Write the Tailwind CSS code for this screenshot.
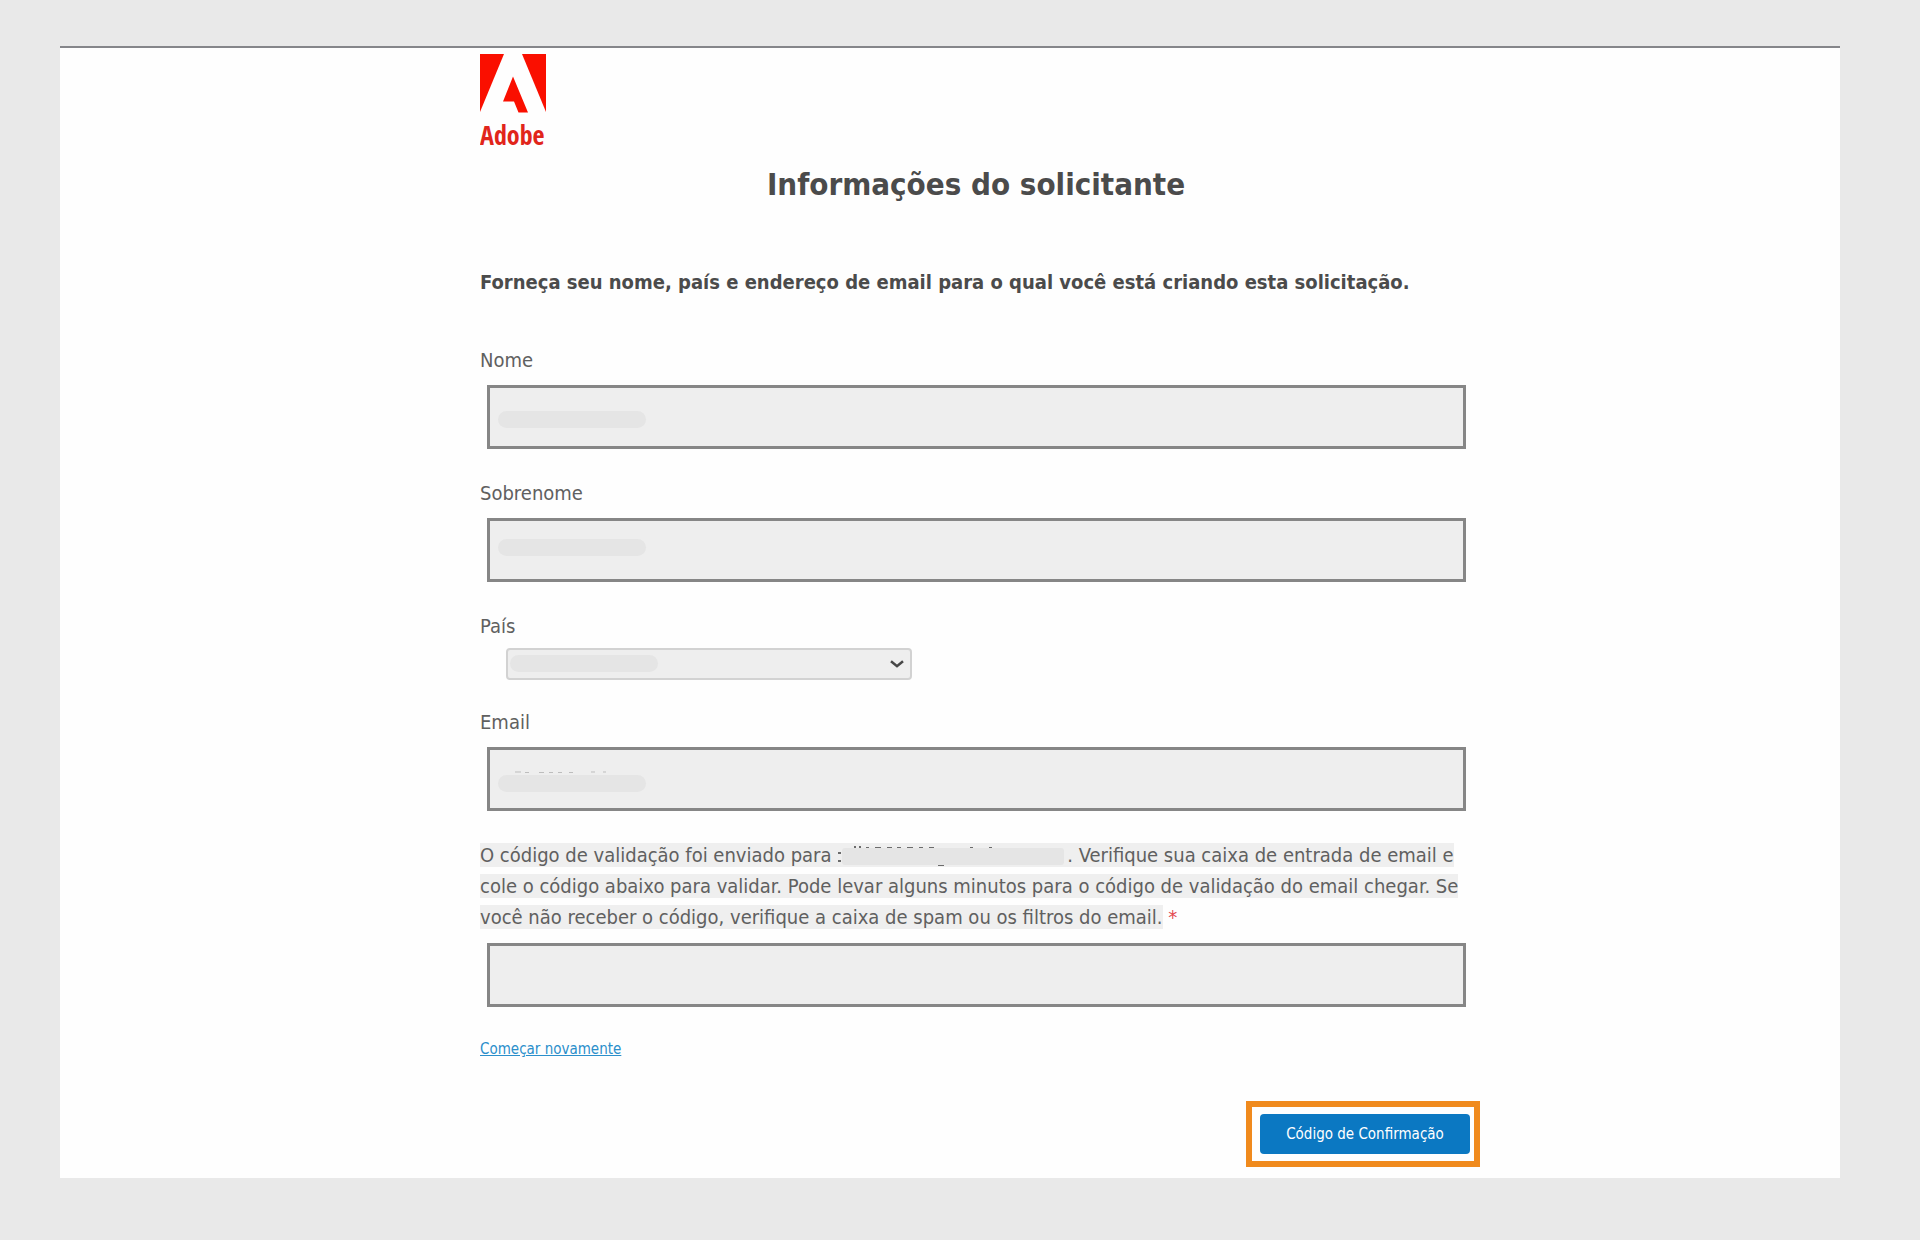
<!DOCTYPE html>
<html lang="pt-BR">
<head>
<meta charset="utf-8">
<meta name="viewport" content="width=device-width, initial-scale=1">
<title>Informações do solicitante</title>
<script src="https://cdn.jsdelivr.net/npm/@tailwindcss/browser@4"></script>
</head>
<body class="min-h-screen bg-[#e9e9e9] pt-[46px] pr-20 pb-16 pl-[60px] font-['DejaVu_Sans_Condensed','Noto_Sans',sans-serif] text-[20px] leading-6 text-[#606060]">
<main class="border-t-2 border-[#85868a] bg-[#fefefe] pt-1.5 pb-[11px] pl-[60px]">
  <form class="mx-auto flex w-full max-w-[1000px] flex-col">
    <svg class="h-24 w-[70px]" viewBox="0 0 70 96" role="img" aria-label="Adobe">
      <g fill="#fa0f00">
        <path d="M0 0H24L0 58Z"/>
        <path d="M42 0H66V58Z"/>
        <path d="M33 22.500L48 58.500H38.500L34 47.500H23Z"/>
      </g>
      <text x="0" y="91" font-family="Open Sans Condensed, Noto Sans Condensed, DejaVu Sans Condensed, sans-serif" font-size="26" font-weight="700" fill="#e1251b">Adobe</text>
    </svg>

    <h1 class="mt-4 mr-2 text-center text-[31px] leading-9 font-bold text-[#4b4b4b]">Informações do solicitante</h1>
    <p class="mt-[68px] font-bold whitespace-nowrap text-[#4b4b4b]">Forneça seu nome, país e endereço de email para o qual você está criando esta solicitação.</p>

    <div class="mt-[54px] flex flex-col gap-[13px]">
      <label for="nome">Nome</label>
      <div class="relative mr-3.5 ml-[7px] flex">
        <input id="nome" type="text" class="h-16 w-full border-3 border-[#868686] bg-[#eeeeee] px-3">
        <span class="absolute top-[26px] left-[11px] h-[17px] w-[148px] rounded-full bg-[#e5e5e5]"></span>
      </div>
    </div>

    <div class="mt-8 flex flex-col gap-[13px]">
      <label for="sobrenome">Sobrenome</label>
      <div class="relative mr-3.5 ml-[7px] flex">
        <input id="sobrenome" type="text" class="h-16 w-full border-3 border-[#868686] bg-[#eeeeee] px-3">
        <span class="absolute top-[21px] left-[11px] h-[17px] w-[148px] rounded-full bg-[#e5e5e5]"></span>
      </div>
    </div>

    <div class="mt-8 flex flex-col gap-2.5">
      <label for="pais">País</label>
      <div class="relative ml-[26px] flex w-[406px]">
        <select id="pais" class="h-8 w-full appearance-none rounded-sm border-2 border-[#d2d2d2] bg-[#eeeeee] px-2"><option></option></select>
        <span class="absolute top-[7px] left-[4px] h-[17px] w-[148px] rounded-full bg-[#e5e5e5]"></span>
        <svg class="pointer-events-none absolute top-3 right-2 h-2 w-3.5" viewBox="0 0 14 8" fill="none" stroke="#474747" stroke-width="2.500"><path d="M1 1.200L7 6.200L13 1.200"/></svg>
      </div>
    </div>

    <div class="mt-[30px] flex flex-col gap-[13px]">
      <label for="email">Email</label>
      <div class="relative mr-3.5 ml-[7px] flex">
        <input id="email" type="email" class="h-16 w-full border-3 border-[#868686] bg-[#eeeeee] px-3">
        <span class="absolute top-[28px] left-[11px] h-[17px] w-[148px] rounded-full bg-[#e5e5e5]"></span>
        <svg class="absolute top-6 left-[26px] h-0.5 w-24" viewBox="0 0 96 2" stroke="#bdbdbd" stroke-width="1"><path d="M2 1H8M12 1.500H16M26 1.500H31M36 1.500H40M45 1.500H49M56 1.500H60M78 1H82M90 1H93"/></svg>
      </div>
    </div>

    <div class="mt-[29px] flex flex-col gap-2.5">
      <label for="codigo" class="leading-[31px] whitespace-nowrap"><span class="bg-[#efefef]">O código de validação foi enviado para <svg class="-mt-1 inline-block h-6 w-[230px]" viewBox="0 0 230 24"><rect x="5" y="5" width="222" height="17" rx="3" fill="#e5e5e5"/><g stroke="#6b6b6b" stroke-width="2"><path d="M1 10H4M1 18H4M17 4H19M22 4H24"/><path stroke-width="1" d="M29 4.500H32M38 4.500H44M50 4.500H55M60 4.500H64M70 4.500H76M82 4.500H86M92 4.500H97M133 4.500H136M152 4.500H155M101 22.500H107"/></g></svg>. Verifique sua caixa de entrada de email e<br>cole o código abaixo para validar. Pode levar alguns minutos para o código de validação do email chegar. Se<br>você não receber o código, verifique a caixa de spam ou os filtros do email.</span> <span class="text-[#e34850]">*</span></label>
      <input id="codigo" type="text" class="mr-3.5 ml-[7px] h-16 border-3 border-[#868686] bg-[#eeeeee] px-3">
    </div>

    <a href="#" class="mt-[30px] self-start text-[15px] text-[#2b8fcb] underline">Começar novamente</a>

    <div class="mt-10 flex self-end border-6 border-[#f08a1d] py-[7px] pr-1 pl-2">
      <button type="submit" class="h-10 w-[210px] rounded-sm bg-[#0b78c2] text-[15px] text-white">Código de Confirmação</button>
    </div>
  </form>
</main>
</body>
</html>
